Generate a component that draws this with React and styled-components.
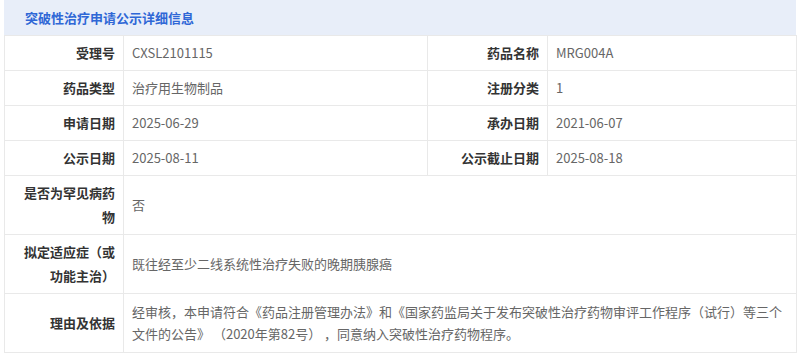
import React from "react";
import styled, { createGlobalStyle } from "styled-components";

const Global = createGlobalStyle`
  html, body { margin: 0; padding: 0; background: #ffffff; }
  body { font-family: "Microsoft YaHei", "Noto Sans CJK SC", sans-serif; }
`;

const Panel = styled.section`
  margin: 0 4px;
  width: 792px;
`;

const Header = styled.div`
  height: 35px;
  display: flex;
  align-items: center;
  padding-left: 21px;
  background: #e8eef9;
  color: #2f67d6;
  font-size: 13px;
  font-weight: 700;
`;

const Table = styled.table`
  width: 792px;
  border-collapse: collapse;
  table-layout: fixed;
  border: 1px solid #e9e9e9;
  border-top: none;
  font-size: 13px;
`;

const Cell = styled.td`
  border: 1px solid #e9e9e9;
  padding: ${(p) => (p.$tight ? "7px 8px" : "5px 8px")};
  line-height: ${(p) => (p.$tight ? "22px" : "24px")};
  vertical-align: middle;
  word-break: break-all;
`;

const Label = styled(Cell)`
  text-align: right;
  font-weight: 700;
  color: #333333;
`;

const Value = styled(Cell)`
  text-align: left;
  color: #666666;
`;

const Line = styled.span`
  display: block;
  white-space: nowrap;
`;

const rows = [
  [["受理号", "CXSL2101115"], ["药品名称", "MRG004A"]],
  [["药品类型", "治疗用生物制品"], ["注册分类", "1"]],
  [["申请日期", "2025-06-29"], ["承办日期", "2021-06-07"]],
  [["公示日期", "2025-08-11"], ["公示截止日期", "2025-08-18"]],
];

export default function App() {
  return (
    <>
      <Global />
      <Panel>
        <Header>突破性治疗申请公示详细信息</Header>
        <Table>
          <colgroup>
            <col style={{ width: 119 }} />
            <col style={{ width: 304 }} />
            <col style={{ width: 120 }} />
            <col style={{ width: 249 }} />
          </colgroup>
          <tbody>
            {rows.map((r, i) => (
              <tr key={i}>
                <Label>{r[0][0]}</Label>
                <Value>{r[0][1]}</Value>
                <Label>{r[1][0]}</Label>
                <Value>{r[1][1]}</Value>
              </tr>
            ))}
            <tr>
              <Label>是否为罕见病药物</Label>
              <Value colSpan={3}>否</Value>
            </tr>
            <tr>
              <Label>拟定适应症（或功能主治）</Label>
              <Value colSpan={3}>既往经至少二线系统性治疗失败的晚期胰腺癌</Value>
            </tr>
            <tr>
              <Label>理由及依据</Label>
              <Value colSpan={3} $tight>
                <Line>经审核，本申请符合《药品注册管理办法》和《国家药监局关于发布突破性治疗药物审评工作程序（试行）等三个</Line>
                <Line>文件的公告》 （2020年第82号） ，同意纳入突破性治疗药物程序。</Line>
              </Value>
            </tr>
          </tbody>
        </Table>
      </Panel>
    </>
  );
}
